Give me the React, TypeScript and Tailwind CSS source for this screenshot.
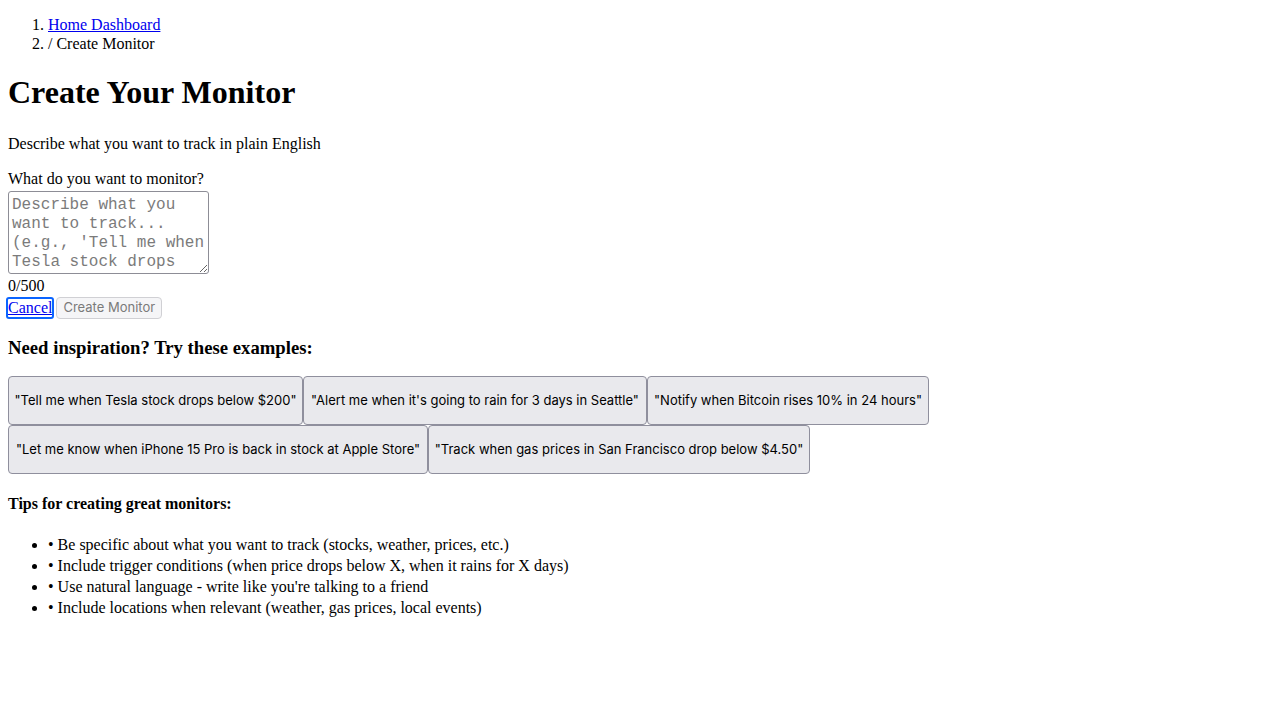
import React from "react";

const examples = [
  { text: '"Tell me when Tesla stock drops below $200"', w: "w-[295px]" },
  { text: '"Alert me when it\'s going to rain for 3 days in Seattle"', w: "w-[344px]" },
  { text: '"Notify when Bitcoin rises 10% in 24 hours"', w: "w-[282px]" },
  { text: '"Let me know when iPhone 15 Pro is back in stock at Apple Store"', w: "w-[420px]" },
  { text: '"Track when gas prices in San Francisco drop below $4.50"', w: "w-[382px]" },
];

const tips = [
  "• Be specific about what you want to track (stocks, weather, prices, etc.)",
  "• Include trigger conditions (when price drops below X, when it rains for X days)",
  "• Use natural language - write like you're talking to a friend",
  "• Include locations when relevant (weather, gas prices, local events)",
];

export default function App() {
  return (
    <div className="min-h-[720px] bg-white px-2 pb-2 font-['Liberation_Serif',serif] text-[16px] text-black">
      <nav>
        <ol className="mt-[15px] list-decimal pl-10 leading-[19px]">
          <li>
            <a href="#" className="text-[#0000ee] underline">
              Home Dashboard
            </a>
          </li>
          <li>/ Create Monitor</li>
        </ol>
      </nav>
      <h1 className="mt-[21px] mb-[23px] text-[32px] font-bold leading-[37px]">Create Your Monitor</h1>
      <p className="mb-4 leading-[19px]">Describe what you want to track in plain English</p>
      <div>
        <label className="block leading-[19px]">What do you want to monitor?</label>
        <textarea
          className="mt-[3px] block h-[83px] w-[201px] resize overflow-hidden rounded-[3px] border border-[#8d8d96] px-[3px] pt-[4px] pb-0 font-['Liberation_Mono',monospace] text-[16px] leading-[19px] placeholder:text-[#7b7b7b]"
          placeholder="Describe what you want to track... (e.g., 'Tell me when Tesla stock drops below $200')"
        />
        <div className="mt-[2px] leading-[19px]">0/500</div>
        <div className="mt-[2px] flex h-[22px] items-center">
          <a
            href="#"
            className="leading-[18px] text-[#0000ee] underline outline-2 outline-[#0a64ff] outline-solid rounded-[1px]"
          >
            Cancel
          </a>
          <button
            disabled
            className="ml-[4px] h-[22px] rounded-[4px] border border-[#d0d0d4] bg-[#f5f5f7] px-[6px] font-['Inter',sans-serif] text-[13px] text-[#7a7a7a]"
          >
            Create Monitor
          </button>
        </div>
      </div>
      <h3 className="mt-[18px] mb-[18px] text-[18.72px] font-bold leading-[21px]">Need inspiration? Try these examples:</h3>
      <div className="flex flex-wrap">
        {examples.map((e) => (
          <button
            key={e.text}
            className={`${e.w} h-[49px] shrink-0 rounded-[4px] border border-[#8f8f9d] bg-[#e9e9ed] px-[5px] text-center font-['Inter',sans-serif] text-[13px] text-black`}
          >
            {e.text}
          </button>
        ))}
      </div>
      <h4 className="mt-[20px] mb-[21px] text-[16px] font-bold leading-[19px]">Tips for creating great monitors:</h4>
      <ul className="list-disc pl-10 leading-[21px]">
        {tips.map((t) => (
          <li key={t}>{t}</li>
        ))}
      </ul>
    </div>
  );
}
